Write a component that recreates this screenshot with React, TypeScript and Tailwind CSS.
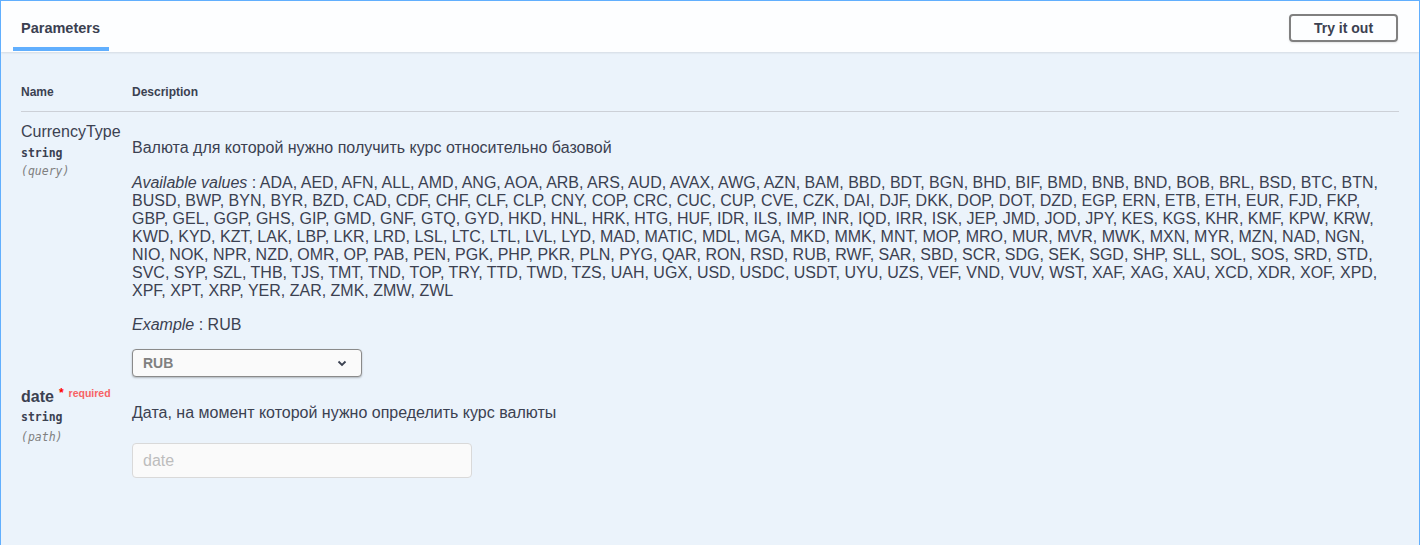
import React from "react";

const values = [
  "ADA, AED, AFN, ALL, AMD, ANG, AOA, ARB, ARS, AUD, AVAX, AWG, AZN, BAM, BBD, BDT, BGN, BHD, BIF, BMD, BNB, BND, BOB, BRL, BSD, BTC, BTN,",
  "BUSD, BWP, BYN, BYR, BZD, CAD, CDF, CHF, CLF, CLP, CNY, COP, CRC, CUC, CUP, CVE, CZK, DAI, DJF, DKK, DOP, DOT, DZD, EGP, ERN, ETB, ETH, EUR, FJD, FKP,",
  "GBP, GEL, GGP, GHS, GIP, GMD, GNF, GTQ, GYD, HKD, HNL, HRK, HTG, HUF, IDR, ILS, IMP, INR, IQD, IRR, ISK, JEP, JMD, JOD, JPY, KES, KGS, KHR, KMF, KPW, KRW,",
  "KWD, KYD, KZT, LAK, LBP, LKR, LRD, LSL, LTC, LTL, LVL, LYD, MAD, MATIC, MDL, MGA, MKD, MMK, MNT, MOP, MRO, MUR, MVR, MWK, MXN, MYR, MZN, NAD, NGN,",
  "NIO, NOK, NPR, NZD, OMR, OP, PAB, PEN, PGK, PHP, PKR, PLN, PYG, QAR, RON, RSD, RUB, RWF, SAR, SBD, SCR, SDG, SEK, SGD, SHP, SLL, SOL, SOS, SRD, STD,",
  "SVC, SYP, SZL, THB, TJS, TMT, TND, TOP, TRY, TTD, TWD, TZS, UAH, UGX, USD, USDC, USDT, UYU, UZS, VEF, VND, VUV, WST, XAF, XAG, XAU, XCD, XDR, XOF, XPD,",
  "XPF, XPT, XRP, YER, ZAR, ZMK, ZMW, ZWL",
];

const mono = "font-['DejaVu_Sans_Mono',monospace] text-[11.5px] leading-[16px]";

export default function App() {
  return (
    <div className="w-[1420px] h-[545px] border-l border-t border-r border-[#61affe] bg-[#ebf3fb] font-['Liberation_Sans',Arial,sans-serif] text-[#3b4151] overflow-hidden">
      {/* Section header */}
      <div className="flex items-start justify-between bg-[#fdfeff] shadow-[0_1px_2px_rgba(0,0,0,0.1)] pr-[21px]">
        <div className="ml-[12px] w-[96px] flex flex-col pt-[17px]">
          <span className="pl-[8px] text-[14.5px] leading-[20px] font-bold">Parameters</span>
          <div className="mt-[9px] h-[4px] bg-[#61affe]"></div>
          <div className="h-[1px]"></div>
        </div>
        <button className="mt-[13px] w-[109px] h-[28px] rounded-[4px] border-2 border-[#808080] bg-transparent text-[14px] font-bold leading-none shadow-[0_1px_2px_rgba(0,0,0,0.1)]">
          Try it out
        </button>
      </div>

      <div className="px-[20px] pt-[32px]">
        {/* Table head */}
        <div className="flex border-b border-[#ccd0d7] pb-[11px] text-[12px] leading-[16px] font-bold">
          <div className="w-[111px]">Name</div>
          <div>Description</div>
        </div>

        {/* CurrencyType row */}
        <div className="flex">
          <div className="w-[111px] pt-[10px] flex flex-col">
            <div className="text-[16px] leading-[20px]">CurrencyType</div>
            <div className={`${mono} font-semibold mt-[3px]`}>string</div>
            <div className={`${mono} italic text-[#808080] mt-[2px]`}>(query)</div>
          </div>
          <div className="pt-[27px] flex flex-col text-[16px] leading-[18px]">
            <div>Валюта для которой нужно получить курс относительно базовой</div>
            <div className="mt-[17px] whitespace-nowrap">
              {values.map((line, i) => (
                <div key={i}>
                  {i === 0 && (
                    <>
                      <i>Available values</i> :{" "}
                    </>
                  )}
                  {line}
                </div>
              ))}
            </div>
            <div className="mt-[16px]">
              <i>Example</i> : RUB
            </div>
            <div className="mt-[15px] w-[230px] h-[28px] rounded-[4px] border border-[#8a8a8a] bg-[#fafafa] shadow-[0_1px_2px_rgba(0,0,0,0.25)] flex items-center justify-between pl-[10px] pr-[14px]">
              <span className="text-[14px] font-bold text-[#808080]">RUB</span>
              <svg width="10" height="7" viewBox="0 0 10 7" fill="none">
                <path d="M1.5 1.5l3.5 3.5 3.5-3.5" stroke="#3b4151" strokeWidth="1.8" />
              </svg>
            </div>
          </div>
        </div>

        {/* date row */}
        <div className="flex">
          <div className="w-[111px] pt-[10px] flex flex-col">
            <div className="flex items-start">
              <span className="text-[16px] leading-[20px] font-bold">date</span>
              <span className="ml-[5px] text-[12px] leading-[12px] font-bold text-[#ff0000]">*</span>
              <span className="ml-[5px] text-[10.5px] leading-[12px] font-semibold text-[#f76265]">required</span>
            </div>
            <div className={`${mono} font-semibold mt-[2px]`}>string</div>
            <div className={`${mono} italic text-[#808080] mt-[4px]`}>(path)</div>
          </div>
          <div className="pt-[8px] flex flex-col text-[16px] leading-[18px]">
            <div className="mt-[19px]">Дата, на момент которой нужно определить курс валюты</div>
            <input
              placeholder="date"
              className="mt-[21px] w-[340px] h-[35px] rounded-[4px] border border-[#d9d9d9] bg-[#fafafa] px-[10px] text-[16px] placeholder:text-[#bdbdbd] outline-none"
            />
          </div>
        </div>
      </div>
    </div>
  );
}
